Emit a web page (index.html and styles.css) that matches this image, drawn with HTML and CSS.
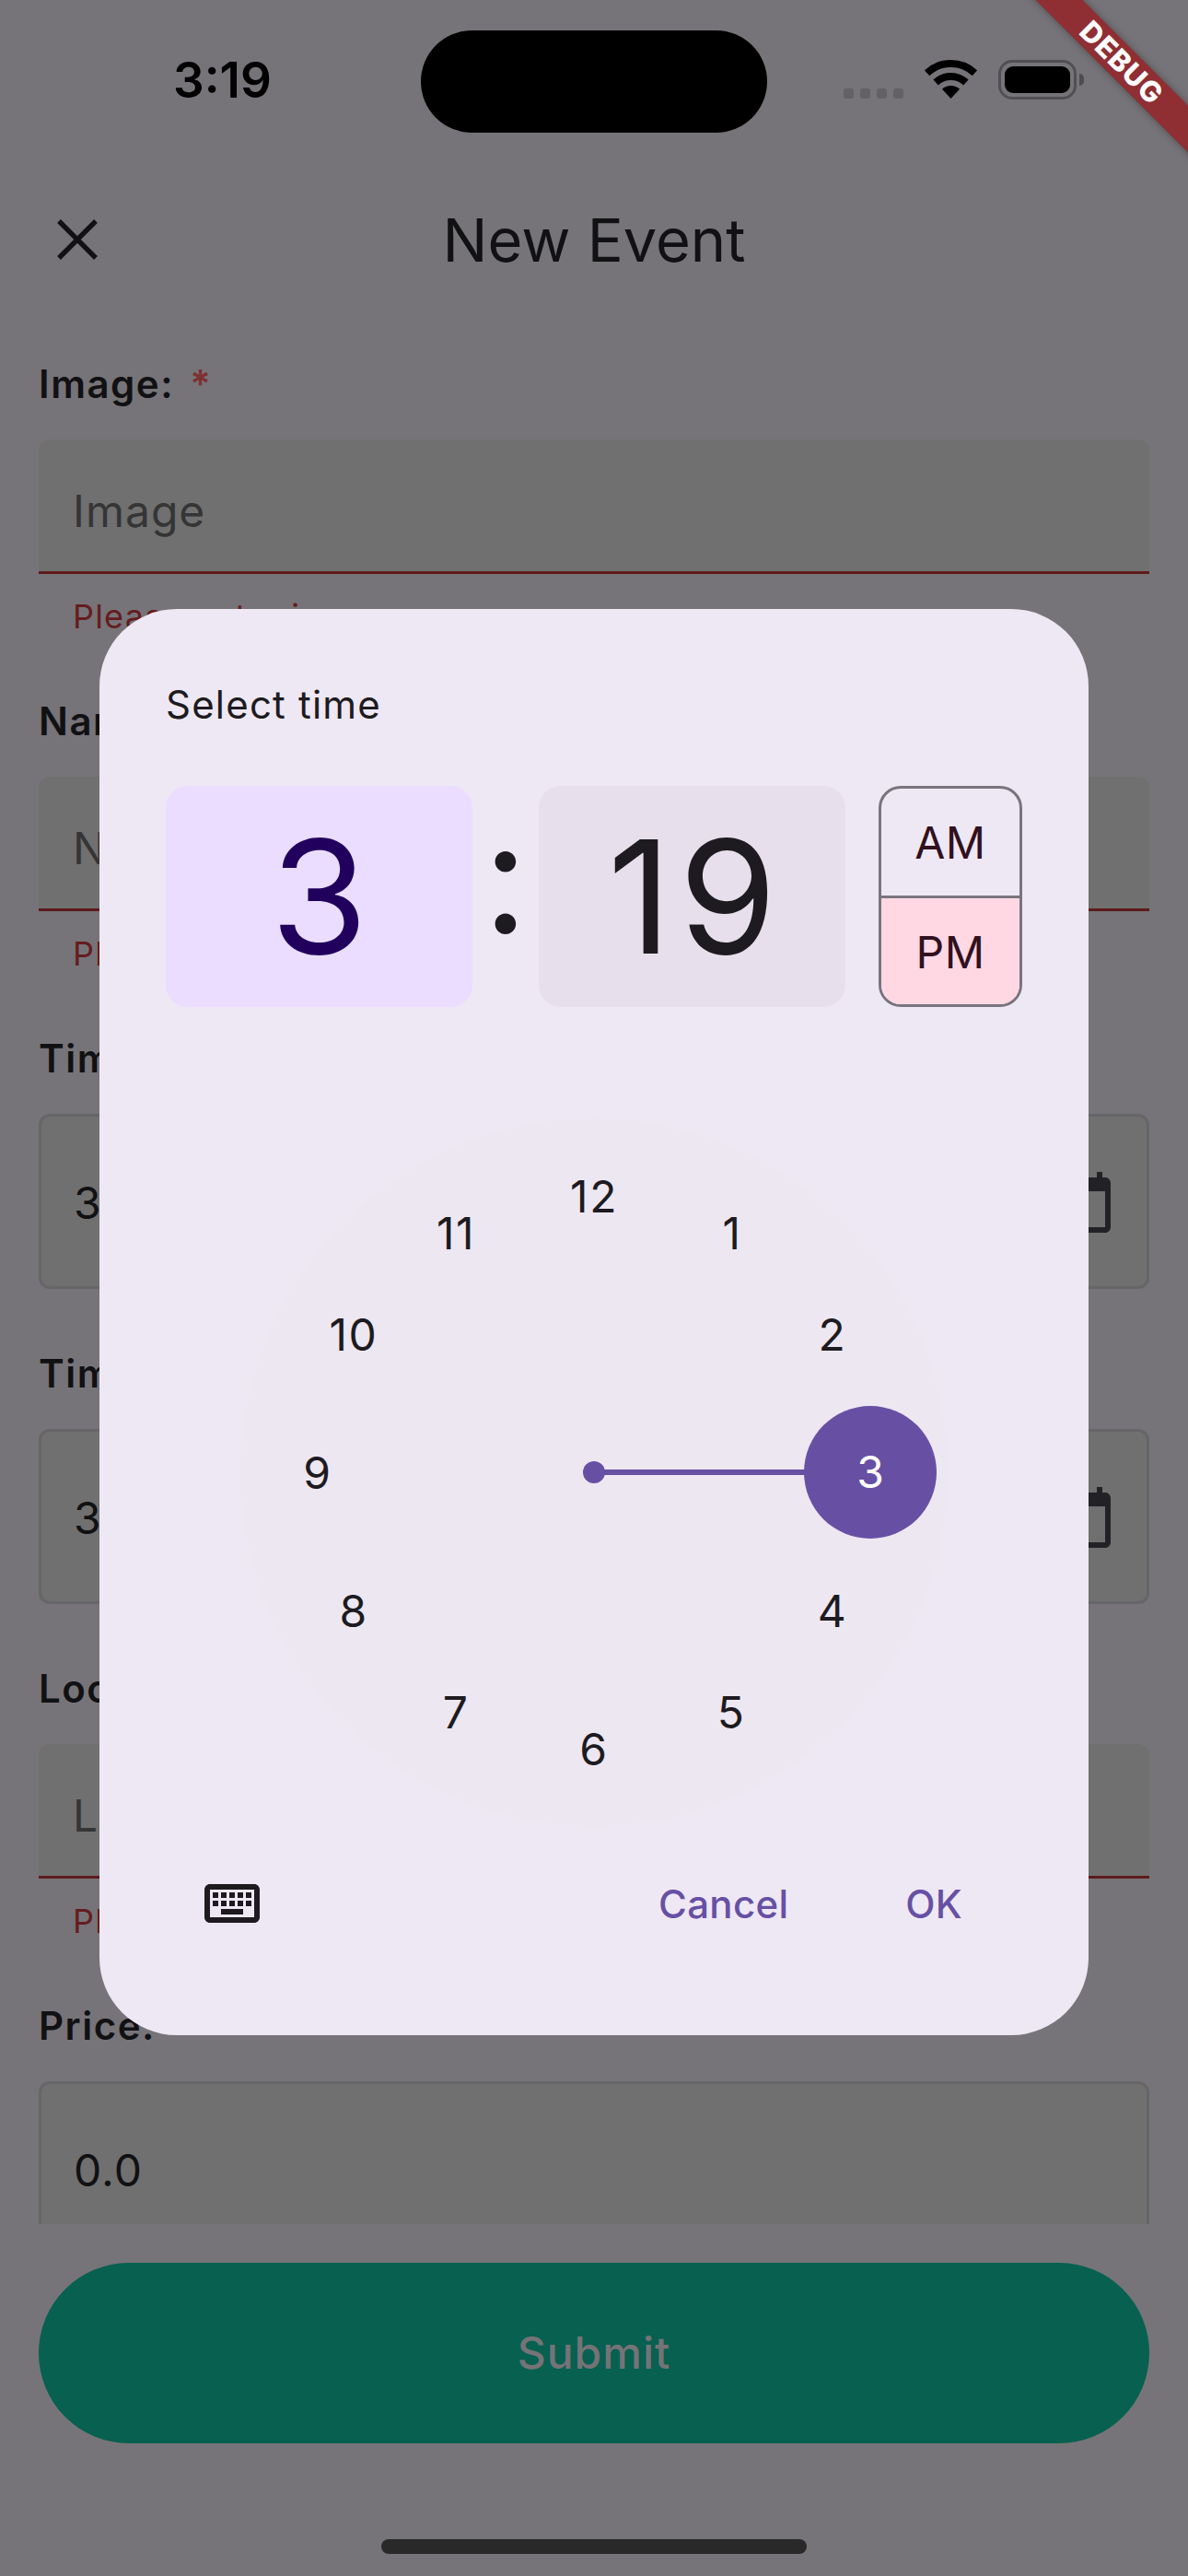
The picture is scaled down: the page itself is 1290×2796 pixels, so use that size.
FILE: index.html
```html
<!DOCTYPE html>
<html lang="en">
<head>
<meta charset="UTF-8">
<meta name="viewport" content="width=device-width, initial-scale=1.0">
<title>New Event</title>
<link rel="stylesheet" href="styles.css">
</head>
<body>

<div class="screen">
    <div class="status-bar">
        <div class="clock">3:19</div>
        <div class="island"></div>
        <div class="status-icons">
            <div class="signal"><span></span><span></span><span></span><span></span></div>
            <svg class="wifi" width="57" height="42" viewBox="0 0 57 42">
                <path d="M2.6 14.2A38 38 0 0 1 54.4 14.2" fill="none" stroke="#000" stroke-width="8"/>
                <path d="M12.1 24.5A24 24 0 0 1 44.9 24.5" fill="none" stroke="#000" stroke-width="8"/>
                <path d="M28.5 42L19 31.8A14 14 0 0 1 38 31.8Z" fill="#000"/>
            </svg>
            <div class="battery"><div class="battery-level"></div></div>
            <div class="battery-cap"></div>
        </div>
    </div>

    <div class="app-bar">
        <svg class="close-icon" width="72" height="72" viewBox="0 0 72 72">
            <path d="M16 15L56 55M56 15L16 55" fill="none" stroke="#111113" stroke-width="5.4"/>
        </svg>
        <div class="title">New Event</div>
    </div>

    <div class="form">
        <div class="section">
            <div class="label">Image: <span class="required">*</span></div>
            <div class="field filled"><span class="placeholder">Image</span></div>
            <div class="helper">Please enter image</div>
        </div>
        <div class="section">
            <div class="label">Name: <span class="required">*</span></div>
            <div class="field filled"><span class="placeholder">Name</span></div>
            <div class="helper">Please enter name</div>
        </div>
        <div class="section tall">
            <div class="label">Time Start: <span class="required">*</span></div>
            <div class="field outlined">
                <span class="value">3:19 PM</span>
                <svg class="calendar-icon" width="72" height="72" viewBox="0 0 24 24"><path d="M20 3h-1V1h-2v2H7V1H5v2H4c-1.1 0-2 .9-2 2v16c0 1.1.9 2 2 2h16c1.1 0 2-.9 2-2V5c0-1.1-.9-2-2-2zm0 18H4V8h16v13z"/></svg>
            </div>
        </div>
        <div class="section tall">
            <div class="label">Time End: <span class="required">*</span></div>
            <div class="field outlined">
                <span class="value">3:19 PM</span>
                <svg class="calendar-icon" width="72" height="72" viewBox="0 0 24 24"><path d="M20 3h-1V1h-2v2H7V1H5v2H4c-1.1 0-2 .9-2 2v16c0 1.1.9 2 2 2h16c1.1 0 2-.9 2-2V5c0-1.1-.9-2-2-2zm0 18H4V8h16v13z"/></svg>
            </div>
        </div>
        <div class="section">
            <div class="label">Location: <span class="required">*</span></div>
            <div class="field filled"><span class="placeholder">Location</span></div>
            <div class="helper">Please enter location</div>
        </div>
        <div class="section">
            <div class="label">Price:</div>
            <div class="field outlined"><span class="value">0.0</span></div>
        </div>
    </div>

    <div class="submit">Submit</div>
    <div class="home-indicator"></div>

    <div class="dialog">
        <div class="help-text">Select time</div>
        <div class="time-row">
            <div class="time-box hour">3</div>
            <div class="colon">:</div>
            <div class="time-box minute">19</div>
            <div class="period">
                <div class="period-item">AM</div>
                <div class="period-item selected">PM</div>
            </div>
        </div>
        <div class="dial">
            <div class="hand"></div>
            <div class="pivot"></div>
            <div class="thumb">3</div>
            <div class="num n12">12</div>
            <div class="num n1">1</div>
            <div class="num n2">2</div>
            <div class="num n4">4</div>
            <div class="num n5">5</div>
            <div class="num n6">6</div>
            <div class="num n7">7</div>
            <div class="num n8">8</div>
            <div class="num n9">9</div>
            <div class="num n10">10</div>
            <div class="num n11">11</div>
        </div>
        <div class="actions">
            <svg class="keyboard-icon" width="72" height="72" viewBox="0 0 24 24"><path d="M20 7v10H4V7h16m0-2H4c-1.1 0-1.99.9-1.99 2L2 17c0 1.1.9 2 2 2h16c1.1 0 2-.9 2-2V7c0-1.1-.9-2-2-2zm-9 3h2v2h-2zm0 3h2v2h-2zM8 8h2v2H8zm0 3h2v2H8zm-3 0h2v2H5zm0-3h2v2H5zm3 6h8v2H8zm6-3h2v2h-2zm0-3h2v2h-2zm3 3h2v2h-2zm0-3h2v2h-2z"/></svg>
            <div class="action cancel">Cancel</div>
            <div class="action">OK</div>
        </div>
    </div>

    <div class="debug-banner">DEBUG</div>
</div>

</body>
</html>
```

FILE: styles.css
```css
body {
    margin: 0;
    font-family: Inter, "Noto Sans", sans-serif;
    color: #111113;
}
.screen {
    position: relative;
    width: 1290px;
    height: 2796px;
    overflow: hidden;
    background-color: #767478;
}

/* status bar */
.status-bar {
    display: grid;
    grid-template-columns: 457px 376px 1fr;
    height: 180px;
}
.clock {
    margin-top: 56px;
    padding-left: 188px;
    font-size: 53px;
    font-weight: 600;
    line-height: 62px;
    color: #000;
}
.island {
    margin-top: 33px;
    height: 111px;
    border-radius: 56px;
    background-color: #000;
}
.status-icons {
    display: flex;
    align-items: flex-end;
    align-self: start;
    margin-top: 65px;
    padding-left: 83px;
}
.signal {
    display: flex;
    gap: 7px;
    margin-right: 23px;
    margin-bottom: 1px;
}
.signal span {
    width: 11px;
    height: 11px;
    border-radius: 3px;
    background-color: #636165;
}
.wifi {
    margin-right: 23px;
    margin-bottom: 1px;
}
.battery {
    box-sizing: border-box;
    width: 85px;
    height: 43px;
    padding: 4px;
    border: 3px solid #504f52;
    border-radius: 15px;
}
.battery-level {
    height: 100%;
    border-radius: 9px;
    background-color: #000;
}
.battery-cap {
    width: 5px;
    height: 13px;
    margin: 0 0 15px 3px;
    border-radius: 0 6px 6px 0;
    background-color: #4c4b4e;
}

/* app bar */
.app-bar {
    display: grid;
    grid-template-columns: 1fr;
    align-items: center;
    height: 164px;
    padding-bottom: 2px;
    box-sizing: border-box;
}
.close-icon {
    grid-area: 1 / 1;
    margin-left: 48px;
}
.title {
    grid-area: 1 / 1;
    text-align: center;
    font-size: 65px;
    line-height: 80px;
}

/* form behind the dialog */
.form {
    box-sizing: border-box;
    height: 2070px;
    padding: 47px 42px 0;
    overflow: hidden;
}
.section {
    margin-bottom: 65px;
}
.section.tall {
    margin-bottom: 66px;
}
.label {
    margin-bottom: 35px;
    font-size: 42px;
    font-weight: 600;
    line-height: 51px;
    letter-spacing: 1.5px;
}
.required {
    margin-left: 5px;
    color: #7e3033;
}
.field {
    display: flex;
    align-items: center;
    justify-content: space-between;
    box-sizing: border-box;
    padding: 0 33px 0 35px;
    background-color: #707070;
    font-size: 48px;
    letter-spacing: 1px;
}
.filled {
    height: 146px;
    padding-top: 12px;
    padding-left: 37px;
    border-bottom: 3px solid #5e1a1c;
    border-radius: 12px 12px 0 0;
}
.outlined {
    height: 190px;
    padding-top: 2px;
    border: 3px solid #666567;
    border-radius: 12px;
}
.placeholder {
    color: #353535;
}
.value {
    color: #111113;
}
.calendar-icon {
    fill: #222226;
}
.helper {
    margin-top: 24px;
    padding: 0 0 1px 37px;
    font-size: 36px;
    line-height: 44px;
    letter-spacing: 1.2px;
    color: #651c1f;
}

/* bottom */
.submit {
    margin: 42px 42px 0;
    height: 196px;
    border-radius: 98px;
    background-color: #076050;
    color: #757377;
    text-align: center;
    font-size: 48px;
    font-weight: 500;
    line-height: 196px;
    letter-spacing: 1px;
}
.home-indicator {
    width: 462px;
    height: 16px;
    margin: 104px auto 0;
    border-radius: 8px;
    background-color: #292929;
}

/* time picker dialog */
.dialog {
    position: absolute;
    top: 661px;
    left: 108px;
    box-sizing: border-box;
    width: 1074px;
    height: 1548px;
    padding: 72px 72px 0;
    border-radius: 84px;
    background-color: #eee8f4;
    color: #1d1b20;
}
.help-text {
    font-size: 42px;
    font-weight: 370;
    line-height: 64px;
    letter-spacing: 1.2px;
}
.time-row {
    display: flex;
    height: 240px;
    margin-top: 56px;
}
.time-box {
    width: 333px;
    border-radius: 24px;
    text-align: center;
    font-size: 171px;
    line-height: 240px;
}
.hour {
    background-color: #eaddff;
    color: #21005d;
}
.minute {
    background-color: #e7e0ec;
    letter-spacing: 8px;
    text-indent: 8px;
}
.colon {
    width: 72px;
    text-align: center;
    font-size: 171px;
    line-height: 196px;
}
.period {
    display: flex;
    flex-direction: column;
    box-sizing: border-box;
    width: 156px;
    margin-left: auto;
    border: 3px solid #79747e;
    border-radius: 24px;
    overflow: hidden;
}
.period-item {
    flex: 1;
    display: flex;
    align-items: center;
    justify-content: center;
    padding-top: 2px;
    font-size: 48px;
    font-weight: 370;
    letter-spacing: 0.5px;
    color: #31111d;
}
.period-item.selected {
    border-top: 3px solid #79747e;
    background-color: #ffd8e4;
}
.dial {
    position: relative;
    width: 768px;
    height: 768px;
    margin: 121px auto 0;
    border-radius: 50%;
    background-color: #ede7f2;
}
.hand {
    position: absolute;
    left: 384px;
    top: 381px;
    width: 250px;
    height: 6px;
    background-color: #6750a4;
}
.pivot {
    position: absolute;
    left: 372px;
    top: 372px;
    width: 24px;
    height: 24px;
    border-radius: 50%;
    background-color: #6750a4;
}
.thumb {
    position: absolute;
    left: 612px;
    top: 312px;
    width: 144px;
    height: 144px;
    border-radius: 50%;
    background-color: #6750a4;
    color: #fff;
    text-align: center;
    font-size: 48px;
    font-weight: 370;
    line-height: 144px;
}
.num {
    position: absolute;
    transform: translate(-50%, -50%);
    font-size: 48px;
    font-weight: 370;
    line-height: 60px;
    letter-spacing: 1.5px;
}
.n12 { left: 384px; top: 85px; }
.n1 { left: 534px; top: 125px; }
.n2 { left: 643px; top: 235px; }
.n4 { left: 643px; top: 535px; }
.n5 { left: 533px; top: 645px; }
.n6 { left: 384px; top: 685px; }
.n7 { left: 234px; top: 645px; }
.n8 { left: 123px; top: 535px; }
.n9 { left: 84px; top: 385px; }
.n10 { left: 123px; top: 235px; }
.n11 { left: 234px; top: 125px; }
.actions {
    display: flex;
    align-items: center;
    height: 72px;
    margin-top: 48px;
    padding: 0 65px 0 36px;
}
.keyboard-icon {
    fill: #1d1b20;
    margin-right: auto;
}
.action {
    font-size: 42px;
    font-weight: 450;
    letter-spacing: 0.3px;
    color: #6750a4;
}
.cancel {
    margin-right: 127px;
}

/* debug ribbon */
.debug-banner {
    position: absolute;
    top: 50px;
    left: 1068px;
    width: 300px;
    height: 36px;
    transform: rotate(45deg);
    background-color: #8f2e33;
    box-shadow: 0 0 9px rgba(0, 0, 0, 0.35);
    color: #fff;
    text-align: center;
    font-size: 31px;
    font-weight: 800;
    line-height: 36px;
    letter-spacing: 1px;
}
```
